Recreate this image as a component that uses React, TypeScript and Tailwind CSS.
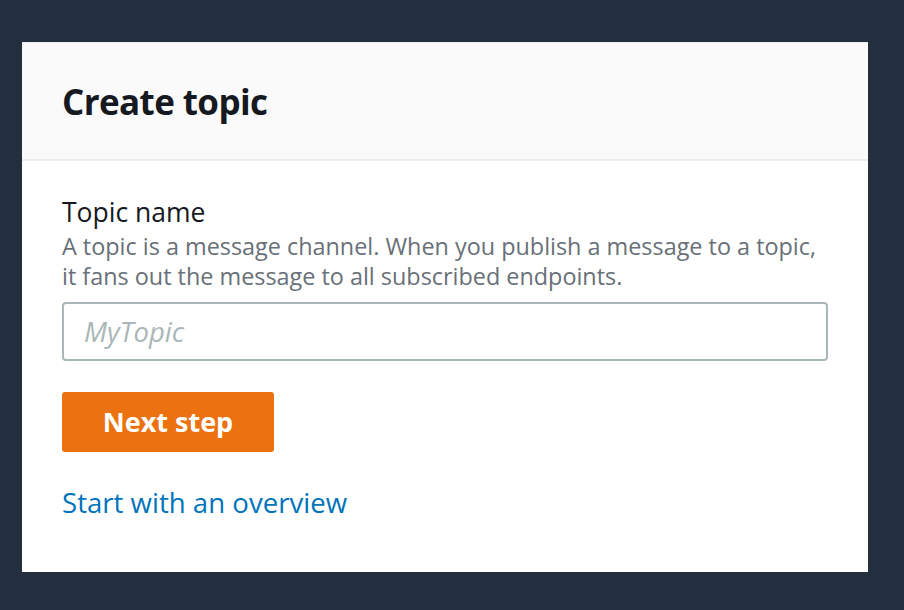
export default function App() {
  return (
    <div
      className="h-[610px] w-[904px] bg-[#232f3e] pt-[42px] pl-[22px]"
      style={{ fontFamily: '"Open Sans", "Noto Sans", sans-serif' }}
    >
      <div className="w-[846px] h-[530px] bg-white border-t border-[#eaeded]">
        <div className="h-[118px] bg-[#fafafa] border-b-2 border-[#eaeded] flex items-center px-[40px] pt-[3px]">
          <h1 className="text-[35px] font-bold text-[#16191f] tracking-[-0.6px]">Create topic</h1>
        </div>
        <div className="px-[40px] pt-[36px]">
          <div className="text-[26.5px] leading-[30px] text-[#16191f]">Topic name</div>
          <p className="mt-[4px] text-[23.4px] leading-[30px] text-[#687078]">
            A topic is a message channel. When you publish a message to a topic,
            <br />
            it fans out the message to all subscribed endpoints.
          </p>
          <input
            className="mt-[11px] w-[766px] h-[59px] border-2 border-[#aab7b8] rounded-[4px] px-[20px] text-[27.5px] italic placeholder:text-[#aab7b8] outline-none"
            placeholder="MyTopic"
          />
          <button className="mt-[31px] block w-[212px] h-[60px] bg-[#ec7211] rounded-[3px] text-white text-[27px] font-bold">
            Next step
          </button>
          <a href="#" className="mt-[32px] block w-max text-[27.6px] leading-[36px] text-[#0073bb]">
            Start with an overview
          </a>
        </div>
      </div>
    </div>
  )
}
